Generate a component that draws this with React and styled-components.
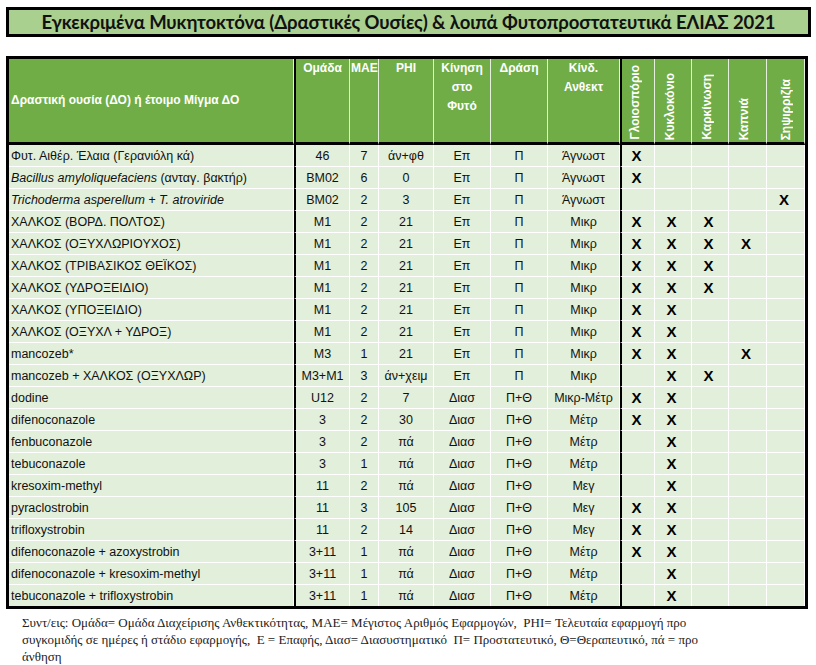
import React from 'react'
import styled, { createGlobalStyle } from 'styled-components'

const GlobalStyle = createGlobalStyle`
  body {
    margin: 0;
    background: #fff;
  }
`

const Page = styled.div`
  width: 816px;
  padding: 7px 5px 0 6px;
  box-sizing: border-box;
`

const TitleBox = styled.div`
  height: 30px;
  box-sizing: border-box;
  border: 3px solid #000;
  background: #a9d08e;
  display: flex;
  align-items: center;
  justify-content: center;
  font-family: Lato, "Open Sans", sans-serif;
  font-weight: 700;
  font-size: 18.5px;
  color: #111;
  letter-spacing: -0.1px;
`

const Table = styled.table`
  margin-top: 19px;
  width: 802px;
  table-layout: fixed;
  border-collapse: separate;
  border-spacing: 0;
  border: 3px solid #000;
  font-family: "Liberation Sans", Arial, sans-serif;
`

const HeadCell = styled.th`
  background: #70ad47;
  color: #fff;
  font-weight: 700;
  font-size: 12px;
  line-height: 19px;
  height: 86px;
  padding: 0 1px;
  box-sizing: border-box;
  text-align: ${p => (p.$left ? 'left' : 'center')};
  vertical-align: ${p => p.$valign || 'top'};
  border-right: 1px solid #e4f0dc;
  border-left: ${p => (p.$thick ? '2px solid #000' : '0')};
  border-bottom: 3px solid #000;
  padding-left: ${p => (p.$left ? '2px' : '1px')};
  padding-right: ${p => p.$pr || 1}px;
`

const Vertical = styled.div`
  writing-mode: vertical-rl;
  transform: rotate(180deg);
  margin: 0 auto 2px;
  line-height: 14px;
  white-space: nowrap;
`

const Cell = styled.td`
  background: #e2efda;
  color: #111;
  font-size: 12.5px;
  height: 21px;
  padding: 0 ${p => (p.$left ? '2px' : '1px')};
  white-space: nowrap;
  overflow: hidden;
  text-align: ${p => (p.$left ? 'left' : 'center')};
  vertical-align: middle;
  border-right: 1px solid #fff;
  border-bottom: ${p => (p.$last ? '0' : '1px solid #fff')};
  border-left: ${p => (p.$thick ? '2px solid #000' : '0')};
  font-weight: ${p => (p.$mark ? 700 : 400)};
  ${p => p.$mark && 'font-size: 15px; color: #000; padding-right: 4px;'}
`

const Footer = styled.p`
  margin: 5px 0 0 16px;
  font-family: "Liberation Serif", "DejaVu Serif", "Times New Roman", serif;
  font-size: 13px;
  line-height: 17px;
  color: #222;
  white-space: pre;
`

const widths = [285, 56, 29, 55, 57, 57, 72, 35, 37, 37, 38, 38]

const diseases = ['Γλοιοσπόριο', 'Κυκλοκόνιο', 'Καρκίνωση', 'Καπνιά', 'Σηψιρριζία']

const rows = [
  ['Φυτ. Αιθέρ. Έλαια (Γερανιόλη κά)', '46', '7', 'άν+φθ', 'Επ', 'Π', 'Άγνωστ', [1, 0, 0, 0, 0]],
  [<><i>Bacillus amyloliquefaciens</i>{'  (ανταγ. βακτήρ)'}</>, 'BM02', '6', '0', 'Επ', 'Π', 'Άγνωστ', [1, 0, 0, 0, 0]],
  [<i>Trichoderma asperellum + T. atroviride</i>, 'BM02', '2', '3', 'Επ', 'Π', 'Άγνωστ', [0, 0, 0, 0, 1]],
  ['ΧΑΛΚΟΣ (ΒΟΡΔ. ΠΟΛΤΟΣ)', 'M1', '2', '21', 'Επ', 'Π', 'Μικρ', [1, 1, 1, 0, 0]],
  ['ΧΑΛΚΟΣ (ΟΞΥΧΛΩΡΙΟΥΧΟΣ)', 'M1', '2', '21', 'Επ', 'Π', 'Μικρ', [1, 1, 1, 1, 0]],
  ['ΧΑΛΚΟΣ (ΤΡΙΒΑΣΙΚΟΣ ΘΕΪΚΟΣ)', 'M1', '2', '21', 'Επ', 'Π', 'Μικρ', [1, 1, 1, 0, 0]],
  ['ΧΑΛΚΟΣ (ΥΔΡΟΞΕΙΔΙΟ)', 'M1', '2', '21', 'Επ', 'Π', 'Μικρ', [1, 1, 1, 0, 0]],
  ['ΧΑΛΚΟΣ (ΥΠΟΞΕΙΔΙΟ)', 'M1', '2', '21', 'Επ', 'Π', 'Μικρ', [1, 1, 0, 0, 0]],
  ['ΧΑΛΚΟΣ (ΟΞΥΧΛ + ΥΔΡΟΞ)', 'M1', '2', '21', 'Επ', 'Π', 'Μικρ', [1, 1, 0, 0, 0]],
  ['mancozeb*', 'M3', '1', '21', 'Επ', 'Π', 'Μικρ', [1, 1, 0, 1, 0]],
  ['mancozeb + ΧΑΛΚΟΣ (ΟΞΥΧΛΩΡ)', 'M3+M1', '3', 'άν+χειμ', 'Επ', 'Π', 'Μικρ', [0, 1, 1, 0, 0]],
  ['dodine', 'U12', '2', '7', 'Διασ', 'Π+Θ', 'Μικρ-Μέτρ', [1, 1, 0, 0, 0]],
  ['difenoconazole', '3', '2', '30', 'Διασ', 'Π+Θ', 'Μέτρ', [1, 1, 0, 0, 0]],
  ['fenbuconazole', '3', '2', 'πά', 'Διασ', 'Π+Θ', 'Μέτρ', [0, 1, 0, 0, 0]],
  ['tebuconazole', '3', '1', 'πά', 'Διασ', 'Π+Θ', 'Μέτρ', [0, 1, 0, 0, 0]],
  ['kresoxim-methyl', '11', '2', 'πά', 'Διασ', 'Π+Θ', 'Μεγ', [0, 1, 0, 0, 0]],
  ['pyraclostrobin', '11', '3', '105', 'Διασ', 'Π+Θ', 'Μεγ', [1, 1, 0, 0, 0]],
  ['trifloxystrobin', '11', '2', '14', 'Διασ', 'Π+Θ', 'Μεγ', [1, 1, 0, 0, 0]],
  ['difenoconazole + azoxystrobin', '3+11', '1', 'πά', 'Διασ', 'Π+Θ', 'Μέτρ', [1, 1, 0, 0, 0]],
  ['difenoconazole + kresoxim-methyl', '3+11', '1', 'πά', 'Διασ', 'Π+Θ', 'Μέτρ', [0, 1, 0, 0, 0]],
  ['tebuconazole + trifloxystrobin', '3+11', '1', 'πά', 'Διασ', 'Π+Θ', 'Μέτρ', [0, 1, 0, 0, 0]],
]

function App() {
  return (
    <Page>
      <GlobalStyle />
      <TitleBox>Εγκεκριμένα Μυκητοκτόνα (Δραστικές Ουσίες) &amp; λοιπά Φυτοπροστατευτικά ΕΛΙΑΣ 2021</TitleBox>
      <Table>
        <colgroup>
          {widths.map((w, i) => <col key={i} style={{ width: w }} />)}
        </colgroup>
        <thead>
          <tr>
            <HeadCell $left $valign="middle">Δραστική ουσία (ΔΟ) ή έτοιμο Μίγμα ΔΟ</HeadCell>
            <HeadCell $thick>Ομάδα</HeadCell>
            <HeadCell>ΜΑΕ</HeadCell>
            <HeadCell>PHI</HeadCell>
            <HeadCell>Κίνηση<br />στο<br />Φυτό</HeadCell>
            <HeadCell>Δράση</HeadCell>
            <HeadCell>Κίνδ.<br />Ανθεκτ</HeadCell>
            {diseases.map((d, i) => (
              <HeadCell key={d} $thick={i === 0} $valign="bottom" $pr={i === 4 ? 1 : 8}>
                <Vertical>{d}</Vertical>
              </HeadCell>
            ))}
          </tr>
        </thead>
        <tbody>
          {rows.map((r, ri) => {
            const last = ri === rows.length - 1
            return (
              <tr key={ri}>
                <Cell $left $last={last}>{r[0]}</Cell>
                {r.slice(1, 7).map((v, ci) => (
                  <Cell key={ci} $thick={ci === 0} $last={last}>{v}</Cell>
                ))}
                {r[7].map((m, mi) => (
                  <Cell key={'m' + mi} $mark $thick={mi === 0} $last={last}>{m ? 'X' : ''}</Cell>
                ))}
              </tr>
            )
          })}
        </tbody>
      </Table>
      <Footer>
        {'Συντ/εις: Ομάδα= Ομάδα Διαχείρισης Ανθεκτικότητας, ΜΑΕ= Μέγιστος Αριθμός Εφαρμογών,  PHI= Τελευταία εφαρμογή προ\n'}
        {'συγκομιδής σε ημέρες ή στάδιο εφαρμογής,  Ε = Επαφής, Διασ= Διασυστηματικό  Π= Προστατευτικό, Θ=Θεραπευτικό, πά = προ\n'}
        {'άνθηση'}
      </Footer>
    </Page>
  )
}

export default App
